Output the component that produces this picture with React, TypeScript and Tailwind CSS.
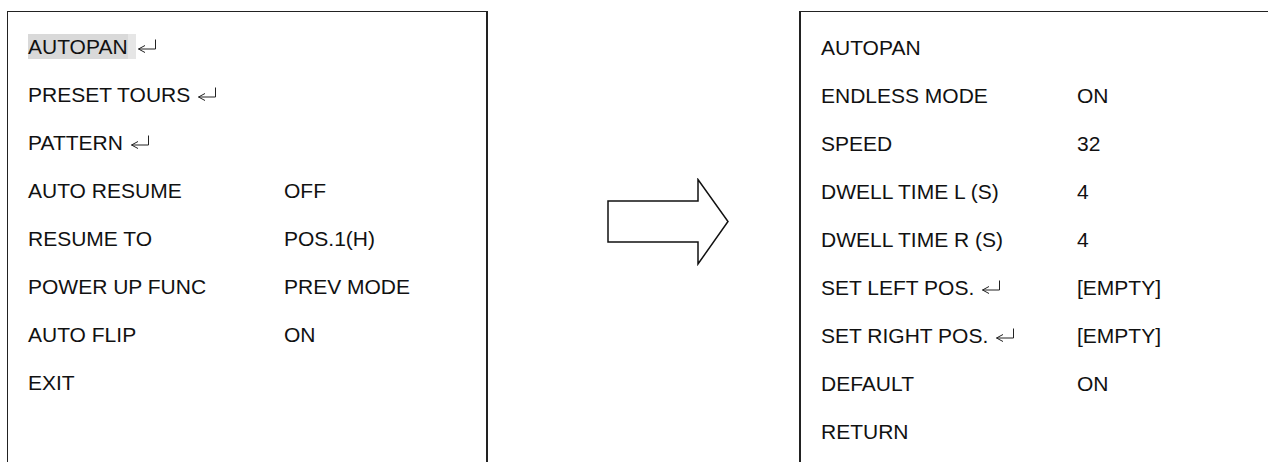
const EnterMark = ({ tight }: { tight?: boolean }) => (
  <svg
    width="20"
    height="14"
    viewBox="0 0 20 14"
    className={tight ? "ml-[1px] shrink-0" : "ml-[7px] shrink-0"}
    fill="none"
    stroke="#222"
    strokeWidth="1"
  >
    <path d="M8 6.5 L1.5 10 L8 13.5" />
    <path d="M1.5 10 H18.5 V0.5" />
  </svg>
);

type Row = { label: string; value?: string; enter?: boolean; active?: boolean };

const leftRows: Row[] = [
  { label: "AUTOPAN", enter: true, active: true },
  { label: "PRESET TOURS", enter: true },
  { label: "PATTERN", enter: true },
  { label: "AUTO RESUME", value: "OFF" },
  { label: "RESUME TO", value: "POS.1(H)" },
  { label: "POWER UP FUNC", value: "PREV MODE" },
  { label: "AUTO FLIP", value: "ON" },
  { label: "EXIT" },
];

const rightRows: Row[] = [
  { label: "AUTOPAN" },
  { label: "ENDLESS MODE", value: "ON" },
  { label: "SPEED", value: "32" },
  { label: "DWELL TIME L (S)", value: "4" },
  { label: "DWELL TIME R (S)", value: "4" },
  { label: "SET LEFT POS.", value: "[EMPTY]", enter: true },
  { label: "SET RIGHT POS.", value: "[EMPTY]", enter: true },
  { label: "DEFAULT", value: "ON" },
  { label: "RETURN" },
];

const MenuRow = ({ row }: { row: Row }) => (
  <div className="grid grid-cols-[256px_1fr] h-[48px] items-center">
    <div className="flex items-center">
      {row.active ? (
        <span className="flex items-center h-[25px]">
          <span className="bg-[#d9d9d9] h-[25px] leading-[25px]">{row.label}</span>
          <span className="bg-[#e6e6e6] h-[25px] w-[8px]" />
        </span>
      ) : (
        <span>{row.label}</span>
      )}
      {row.enter && <EnterMark tight={row.active} />}
    </div>
    <div>{row.value}</div>
  </div>
);

export default function App() {
  return (
    <div className="w-[1268px] h-[462px] overflow-hidden bg-white flex items-start text-[21px] text-[#111] font-['Liberation_Sans',Arial,sans-serif] leading-none">
      <div className="ml-[7px] mt-[11px] w-[481px] h-[480px] shrink-0 border-t border-l border-r-2 border-[#222] pl-[20px] pt-[10px]">
        {leftRows.map((r) => (
          <MenuRow key={r.label} row={r} />
        ))}
      </div>

      <svg width="123" height="88" viewBox="0 0 123 88" className="ml-[119px] mt-[178px] shrink-0" fill="none" stroke="#111" strokeWidth="1.5">
        <path d="M1 23 H91 V1.5 L121 43.5 L91 86 V64 H1 Z" strokeLinejoin="miter" />
      </svg>

      <div className="ml-[69px] mt-[11px] w-[520px] h-[480px] shrink-0 border-t border-l-2 border-[#222] pl-[20px] pt-[11px]">
        {rightRows.map((r) => (
          <MenuRow key={r.label} row={r} />
        ))}
      </div>
    </div>
  );
}
